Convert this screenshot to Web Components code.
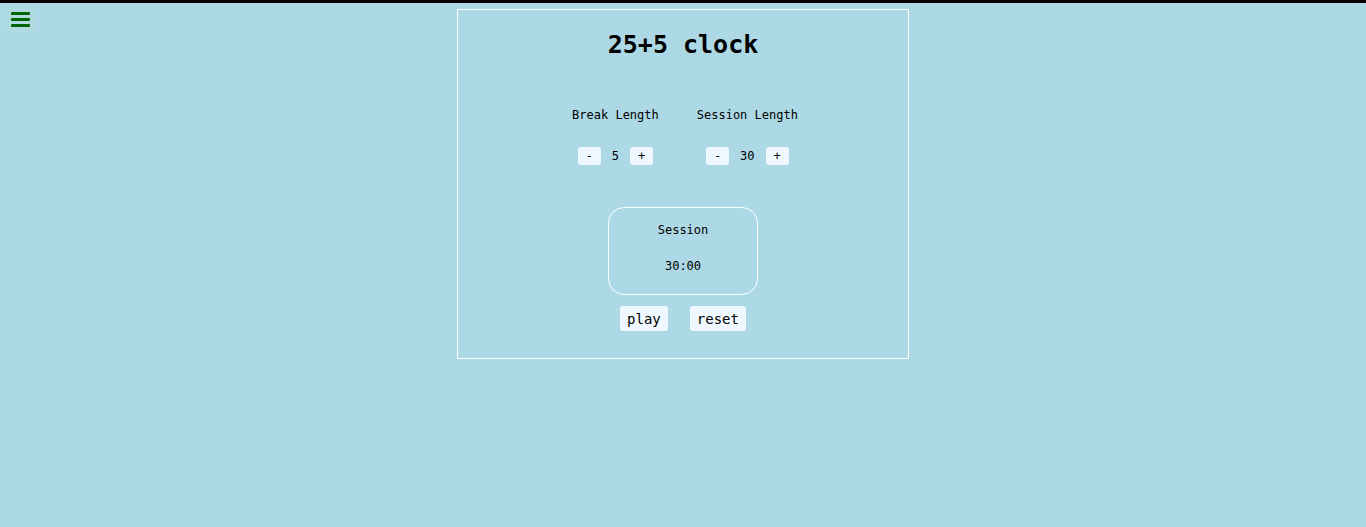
<!DOCTYPE html>
<html lang="en">
<head>
<meta charset="utf-8">
<meta name="viewport" content="width=device-width, initial-scale=1">
<title>25+5 clock</title>
<style>
  body {
    margin: 0;
    min-height: 100vh;
    box-sizing: border-box;
    border-top: 3px solid #000;
    background: #add8e6;
    color: #000;
    font: 12px/18px "DejaVu Sans Mono", "Liberation Mono", monospace;
  }
</style>
</head>
<body>
<clock-app></clock-app>

<template id="clock-app">
  <style>
    :host { display: grid; grid-template-columns: 1fr minmax(auto, 452px) 1fr; align-items: start; padding: 6px; }
    main {
      box-sizing: border-box;
      border: 1px solid #fff;
      padding: 20px 0 27px;
      display: flex;
      flex-direction: column;
      align-items: center;
    }
    h1 { margin: 0; font: bold 25px/30px "DejaVu Sans Mono", "Liberation Mono", monospace; }
    .lengths { display: flex; gap: 38px; margin: 46px 0 42px; padding-left: 4px; }
    .controls { display: flex; gap: 22px; margin-top: 11px; }
  </style>
  <menu-button></menu-button>
  <main>
    <h1>25+5 clock</h1>
    <div class="lengths">
      <length-setting value="5">Break Length</length-setting>
      <length-setting value="30">Session Length</length-setting>
    </div>
    <timer-display time="30:00">Session</timer-display>
    <div class="controls">
      <clock-button>play</clock-button>
      <clock-button>reset</clock-button>
    </div>
  </main>
</template>

<template id="menu-button">
  <style>
    :host { display: block; }
    button { display: block; border: 0; margin: 0; padding: 3px 5px; background: #b0dadf; cursor: pointer; }
    svg { display: block; }
  </style>
  <button type="button" aria-label="Menu">
    <svg width="19" height="17" viewBox="0 0 19 17" fill="#006400" aria-hidden="true">
      <rect y="0" width="19" height="3" rx="1"/>
      <rect y="6" width="19" height="3" rx="1"/>
      <rect y="12" width="19" height="3" rx="1"/>
    </svg>
  </button>
</template>

<template id="length-setting">
  <style>
    :host { display: flex; flex-direction: column; align-items: center; gap: 23px; }
    .row { display: flex; align-items: center; gap: 11px; }
    button {
      width: 23px; height: 18px; padding: 0; border: 0; border-radius: 3px;
      background: #f0f8ff; color: #000; font: inherit; cursor: pointer;
    }
  </style>
  <div id="label"><slot></slot></div>
  <div class="row" role="group" aria-labelledby="label">
    <button type="button" class="down">-</button>
    <output></output>
    <button type="button" class="up">+</button>
  </div>
</template>

<template id="timer-display">
  <style>
    :host {
      display: flex; flex-direction: column; align-items: center; gap: 18px;
      box-sizing: border-box; width: 150px; padding: 13px 0 19px;
      border: 1px solid #fff; border-radius: 16px;
    }
  </style>
  <div><slot></slot></div>
  <time></time>
</template>

<template id="clock-button">
  <style>
    :host { display: block; }
    button {
      display: block; margin: 0; padding: 5px 7px 3px; border: 0; border-radius: 3px;
      background: #f0f8ff; color: #000;
      font: 14px/17px "DejaVu Sans Mono", "Liberation Mono", monospace; cursor: pointer;
    }
  </style>
  <button type="button"><slot></slot></button>
</template>

<script>
  class TemplateElement extends HTMLElement {
    constructor() {
      super();
      const template = document.getElementById(this.localName);
      this.attachShadow({ mode: "open" }).append(template.content.cloneNode(true));
    }
  }

  class MenuButton extends TemplateElement {}
  class ClockButton extends TemplateElement {}
  class ClockApp extends TemplateElement {}

  class LengthSetting extends TemplateElement {
    connectedCallback() {
      const output = this.shadowRoot.querySelector("output");
      output.textContent = this.getAttribute("value");
      const step = (amount) => {
        const next = Math.min(60, Math.max(1, Number(output.textContent) + amount));
        output.textContent = next;
      };
      this.shadowRoot.querySelector(".down").onclick = () => step(-1);
      this.shadowRoot.querySelector(".up").onclick = () => step(1);
    }
  }

  class TimerDisplay extends TemplateElement {
    connectedCallback() {
      this.shadowRoot.querySelector("time").textContent = this.getAttribute("time");
    }
  }

  customElements.define("menu-button", MenuButton);
  customElements.define("clock-button", ClockButton);
  customElements.define("length-setting", LengthSetting);
  customElements.define("timer-display", TimerDisplay);
  customElements.define("clock-app", ClockApp);
</script>
</body>
</html>
